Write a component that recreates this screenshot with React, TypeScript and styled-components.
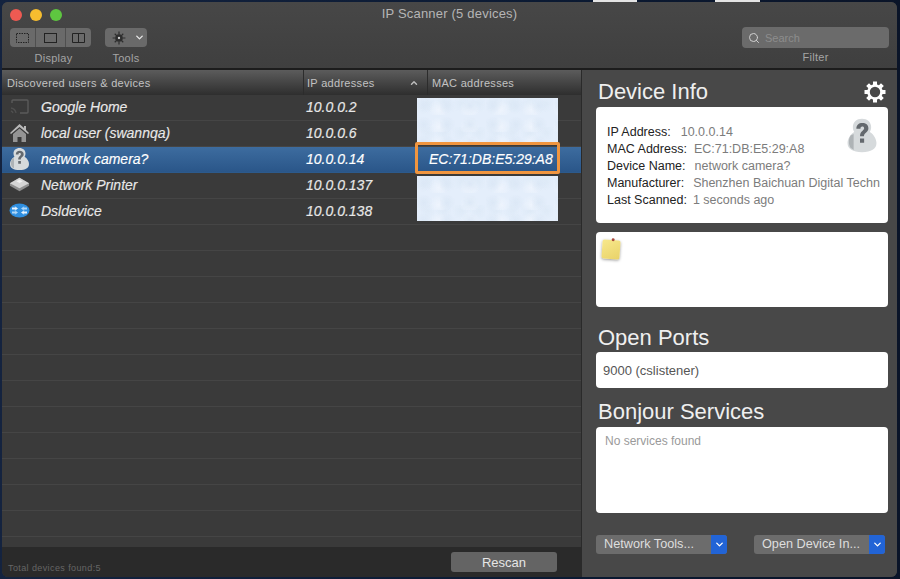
import styled, { createGlobalStyle } from "styled-components";
import { Search, ChevronDown, ChevronUp } from "lucide-react";

const GlobalStyle = createGlobalStyle`
  html, body {
    margin: 0;
    padding: 0;
    width: 900px;
    height: 579px;
    overflow: hidden;
    background: #0c1a33;
    font-family: "Liberation Sans", Arial, sans-serif;
  }
`;

const Desktop = styled.div`
  width: 900px;
  height: 579px;
  padding: 2px 3px 2px 2px;
  box-sizing: border-box;
  position: relative;
  background: linear-gradient(90deg, #14233f, #0b1a33 60%, #0a1428);
`;

const MenuScrap = styled.span<{ $left: number; $w: number }>`
  position: absolute;
  top: 0;
  left: ${(p) => p.$left}px;
  width: ${(p) => p.$w}px;
  height: 2px;
  background: #e4e4e4;
`;

const Window = styled.div`
  width: 100%;
  height: 100%;
  display: flex;
  flex-direction: column;
  border-radius: 6px;
  overflow: hidden;
  background: #3c3c3c;
  position: relative;
`;

const TitleBar = styled.div`
  height: 66px;
  flex: none;
  position: relative;
  background: linear-gradient(180deg, #474747, #3f3f3f);
  border-bottom: 2px solid #1c1c1c;
  padding: 0 8px;
  display: flex;
  flex-direction: column;
`;

const TopLine = styled.div`
  height: 25px;
  display: flex;
  align-items: center;
  gap: 8px;
  position: relative;
`;

const Light = styled.span<{ $color: string }>`
  width: 12px;
  height: 12px;
  border-radius: 50%;
  background: ${(p) => p.$color};
`;

const WindowTitle = styled.div`
  position: absolute;
  left: 0;
  right: 0;
  top: 4px;
  text-align: center;
  font-size: 13px;
  color: #b5b5b5;
  letter-spacing: 0.2px;
`;

const ToolRow = styled.div`
  display: flex;
  justify-content: space-between;
  align-items: flex-start;
`;

const ToolGroups = styled.div`
  display: flex;
  gap: 14px;
`;

const ToolGroup = styled.div`
  display: flex;
  flex-direction: column;
  align-items: center;
  gap: 5px;
  padding-top: 1px;
`;

const ToolLabel = styled.span<{ $offset?: number }>`
  font-size: 11px;
  line-height: 13px;
  color: #a5a5a5;
  letter-spacing: 0.3px;
  padding-left: ${(p) => p.$offset ?? 0}px;
`;

const Segmented = styled.div`
  display: flex;
  height: 19px;
  border-radius: 4px;
  overflow: hidden;
  background: #6a6a6a;
`;

const Segment = styled.div<{ $w: number; $plain?: boolean }>`
  width: ${(p) => p.$w}px;
  display: flex;
  align-items: center;
  justify-content: center;
  border-left: ${(p) => (p.$plain ? "none" : "1px solid #4f4f4f")};
  box-sizing: border-box;
  &:first-child {
    border-left: none;
  }
`;

const FilterGroup = styled.div`
  display: flex;
  flex-direction: column;
  align-items: center;
  gap: 3px;
`;

const SearchBox = styled.div`
  width: 147px;
  height: 21px;
  border-radius: 4px;
  background: #6b6b6b;
  display: flex;
  align-items: center;
  gap: 5px;
  padding-left: 6px;
  box-sizing: border-box;
  color: #d0d0d0;
  font-size: 11px;
  span {
    color: #8d8d8d;
  }
`;

const Body = styled.div`
  flex: 1;
  display: flex;
  min-height: 0;
`;

const LeftPane = styled.div`
  width: 579px;
  flex: none;
  display: flex;
  flex-direction: column;
  position: relative;
  border-right: 1px solid #2a2a2a;
`;

const HeaderRow = styled.div`
  height: 25px;
  flex: none;
  display: grid;
  grid-template-columns: 301px 124px 1fr;
  background: linear-gradient(180deg, #5c5c5c, #2e2e2e);
`;

const HeaderCell = styled.div<{ $pad: number }>`
  display: flex;
  align-items: center;
  justify-content: space-between;
  padding: 0 8px 0 ${(p) => p.$pad}px;
  font-size: 11px;
  letter-spacing: 0.3px;
  color: #c2c2c2;
  border-left: 1px solid #2c2c2c;
  &:first-child {
    border-left: none;
  }
`;

const List = styled.div`
  flex: 1;
  min-height: 0;
  overflow: hidden;
  position: relative;
  background: #3a3a3a;
`;

const Row = styled.div<{ $selected?: boolean }>`
  height: 26px;
  box-sizing: border-box;
  padding-bottom: 2px;
  display: grid;
  grid-template-columns: 301px 124px 1fr;
  align-items: center;
  border-bottom: 1px solid ${(p) => (p.$selected ? "#2c5a8c" : "#454545")};
  background: ${(p) =>
    p.$selected ? "linear-gradient(180deg, #3d6c9f, #2a5689)" : "#3a3a3a"};
  font-style: italic;
  font-size: 14px;
  color: ${(p) => (p.$selected ? "#fff" : "#e8e8e8")};
  -webkit-text-stroke: 0.15px;
`;

const NameCell = styled.div`
  display: flex;
  align-items: center;
  gap: 11px;
  padding-left: 7px;
`;

const IconSlot = styled.span`
  width: 21px;
  height: 21px;
  flex: none;
  display: flex;
  align-items: center;
  justify-content: center;
`;

const IpCell = styled.div`
  padding-left: 3px;
`;

const MacCell = styled.div`
  padding-left: 2px;
  color: #fff;
`;

const Redacted = styled.div<{ $top: number; $h: number }>`
  position: absolute;
  left: 415px;
  width: 141px;
  top: ${(p) => p.$top}px;
  height: ${(p) => p.$h}px;
  background-color: #e4eefb;
  background-image:
    radial-gradient(circle at 30% 40%, #dce8f6 0, transparent 45%),
    radial-gradient(circle at 70% 70%, #eef4fd 0, transparent 40%),
    radial-gradient(circle at 60% 20%, #deeaf7 0, transparent 35%);
  background-size: 23px 19px, 31px 17px, 17px 29px;
`;

const Highlight = styled.div`
  position: absolute;
  left: 413px;
  top: 47px;
  width: 145px;
  height: 32px;
  border: 3px solid #f0953f;
  border-radius: 2px;
  box-sizing: border-box;
`;

const Footer = styled.div`
  height: 30px;
  flex: none;
  background: #2a2a2a;
  display: flex;
  align-items: center;
  justify-content: space-between;
  padding: 0 24px 0 6px;
`;

const TotalText = styled.span`
  font-size: 9px;
  letter-spacing: 0.4px;
  color: #666;
  margin-top: 11px;
`;

const RescanButton = styled.button`
  width: 106px;
  height: 20px;
  border: none;
  border-radius: 3px;
  background: #646464;
  color: #e6e6e6;
  font-family: inherit;
  font-size: 13px;
  padding: 0;
`;

const RightPane = styled.div`
  flex: 1;
  background: #484848;
  display: flex;
  flex-direction: column;
  padding: 0 9px 0 14px;
  min-width: 0;
`;

const SectionHead = styled.div<{ $mt: number }>`
  display: flex;
  align-items: center;
  justify-content: space-between;
  margin-top: ${(p) => p.$mt}px;
  font-size: 22px;
  line-height: 26px;
  color: #efefef;
  padding-left: 2px;
  padding-right: 1px;
`;

const Card = styled.div<{ $h: number; $mt: number }>`
  height: ${(p) => p.$h}px;
  margin-top: ${(p) => p.$mt}px;
  border-radius: 4px;
  background: #fff;
  position: relative;
  box-sizing: border-box;
  flex: none;
`;

const InfoGrid = styled.div`
  padding: 17px 0 0 11px;
  font-size: 12.5px;
  line-height: 17px;
  white-space: nowrap;
  overflow: hidden;
`;

const InfoLine = styled.div<{ $gap: number }>`
  display: flex;
  gap: ${(p) => p.$gap}px;
  color: #7c7c7c;
  b {
    font-weight: 400;
    color: #222;
  }
`;

const CameraBadge = styled.div`
  position: absolute;
  right: 10px;
  top: 10px;
`;

const NoteIcon = styled.div`
  position: absolute;
  left: 6px;
  top: 8px;
  width: 18px;
  height: 19px;
  border-radius: 2px;
  background: linear-gradient(150deg, #f7e88c, #e9d268);
  box-shadow: 0 1px 3px rgba(0, 0, 0, 0.4);
  transform: rotate(4deg);
  &::after {
    content: "";
    position: absolute;
    top: -2px;
    left: 9px;
    width: 3px;
    height: 3px;
    border-radius: 50%;
    background: #a8483a;
  }
`;

const PortText = styled.div`
  padding: 11px 0 0 7px;
  font-size: 13px;
  line-height: 15px;
  color: #555;
`;

const EmptyText = styled.div`
  padding: 7px 0 0 9px;
  font-size: 12px;
  color: #9a9a9a;
`;

const BottomBar = styled.div`
  display: flex;
  justify-content: space-between;
  margin-top: 22px;
  padding-right: 3px;
`;

const SplitButton = styled.div`
  width: 131px;
  height: 19px;
  display: flex;
  border-radius: 3px;
  overflow: hidden;
  background: #6c6c6c;
  font-size: 12.7px;
  color: #dedede;
`;

const SplitLabel = styled.span`
  flex: 1;
  padding-left: 8px;
  line-height: 19px;
  white-space: nowrap;
`;

const SplitArrow = styled.span`
  width: 16px;
  background: #2264d6;
  display: flex;
  align-items: center;
  justify-content: center;
  color: #fff;
`;

const CastIcon = () => (
  <svg width="21" height="17" viewBox="0 0 21 17" fill="none" stroke="#5b5b5b" strokeWidth="1.4">
    <path d="M3 5V3a1 1 0 0 1 1-1h14a1 1 0 0 1 1 1v11a1 1 0 0 1-1 1h-7" />
    <path d="M2 10a6 6 0 0 1 5 5M2 13a3 3 0 0 1 2 2" stroke="#4f4f4f" />
  </svg>
);

const HouseIcon = () => (
  <svg width="21" height="20" viewBox="0 0 21 20">
    <path d="M10.5 1 1 10l1 1 8.5-7 8.500 7 1-1-3-3V3h-2v2z" fill="#b8b8b8" />
    <path d="M4 11l6.500-5.500L17 11v8h-4.500v-5h-4v5H4z" fill="#949494" />
  </svg>
);

const CameraIcon = ({ w = 21, h = 24 }: { w?: number; h?: number }) => (
  <svg width={w} height={h} viewBox="0 0 21 24">
    <path d="M10.500 1c3.500 0 6 2.300 6 5.500 0 1.300-.3 2.300-.9 3.200C18.500 11.500 20 14.500 20 17c0 4-3.500 6-9.500 6S1 21 1 17c0-2.500 1.500-5.500 4.400-7.300-.6-.9-.9-1.900-.9-3.200 0-3.200 2.500-5.500 6-5.500z" fill="#d6dadc" />
    <path d="M3 12c-1.500 2.500-1.500 6 0 8l2 1.500V11z" fill="#aeb3b6" />
    <path d="M6.800 7.500c0-2.400 1.600-3.700 3.900-3.700 2.300 0 4 1.200 4 3.400 0 2.800-2.900 2.900-2.900 5.300H9.200c0-3.500 2.700-3.600 2.700-5.200 0-.8-.5-1.200-1.200-1.200-.8 0-1.200.5-1.200 1.400zM9.200 14h2.700v2.800H9.200z" fill="#64696e" />
  </svg>
);

const PrinterIcon = () => (
  <svg width="23" height="17" viewBox="0 0 23 17">
    <path d="M1 7l10.500-6L22 7v3l-10.500 6L1 10z" fill="#8f8f8f" />
    <path d="M1 7l10.500-6L22 7l-10.500 5.500z" fill="#d4d4d4" />
    <path d="M8 5l3.500-1.800L15 5l-3.500 1.800z" fill="#f0f0f0" />
  </svg>
);

const RouterIcon = () => (
  <svg width="21" height="15" viewBox="0 0 21 15">
    <ellipse cx="10.500" cy="7.500" rx="10" ry="7" fill="#2f8fe0" />
    <path d="M3 4.500h3.500L5.500 3 9 5.500 5.500 8l1-1.500H3zM18 10.500h-3.500l1 1.500L12 9.500 15.500 7l-1 1.500H18z" fill="#e8f4ff" />
    <path d="M18 4.500h-3.500l1-1.500L12 5.500 15.500 8l-1-1.500H18zM3 10.500h3.500l-1 1.500L9 9.500 5.500 7l1 1.500H3z" fill="#cfe8ff" opacity=".8" />
  </svg>
);

const SmallGear = () => (
  <svg width="14" height="14" viewBox="0 0 24 24" fill="#2e2e2e">
    <circle cx="12" cy="12" r="6.500" />
    <path d="M11 1h2v5h-2zM11 18h2v5h-2zM1 11h5v2H1zM18 11h5v2h-5zM4 5.400 5.400 4l3.500 3.500-1.400 1.400zM15.100 16.500l1.400-1.400 3.500 3.500-1.400 1.400zM4 18.600l3.500-3.500 1.400 1.400L5.400 20zM15.100 7.500 18.600 4 20 5.400l-3.500 3.500z" />
    <circle cx="12" cy="12" r="2" fill="#cfcfcf" />
  </svg>
);

const BigGear = () => (
  <svg width="24" height="24" viewBox="0 0 24 24" fill="none" stroke="#fff" strokeLinejoin="round">
    <circle cx="12" cy="12" r="6.500" strokeWidth="2.600" />
    <path
      strokeWidth="4"
      d="M12 1.500v3.500M12 19v3.500M1.500 12H5M19 12h3.500M4.600 4.600l2.500 2.500M16.900 16.900l2.500 2.500M4.600 19.400l2.500-2.500M16.900 7.100l2.500-2.500"
    />
  </svg>
);

interface IDevice {
  name: string;
  ip: string;
  mac?: string;
  icon: React.ReactNode;
  selected?: boolean;
}

const devices: IDevice[] = [
  { name: "Google Home", ip: "10.0.0.2", icon: <CastIcon /> },
  { name: "local user (swannqa)", ip: "10.0.0.6", icon: <HouseIcon /> },
  { name: "network camera?", ip: "10.0.0.14", mac: "EC:71:DB:E5:29:A8", icon: <CameraIcon />, selected: true },
  { name: "Network Printer", ip: "10.0.0.137", icon: <PrinterIcon /> },
  { name: "Dsldevice", ip: "10.0.0.138", icon: <RouterIcon /> },
];

const emptyRows = Array.from({ length: 13 }, (_, i) => i);

function App() {
  return (
    <>
      <GlobalStyle />
      <Desktop>
        <MenuScrap $left={593} $w={44} />
        <MenuScrap $left={715} $w={45} />
        <Window>
          <TitleBar>
            <TopLine>
              <Light $color="#ee5a52" />
              <Light $color="#f6bd2f" />
              <Light $color="#5ec640" />
              <WindowTitle>IP Scanner (5 devices)</WindowTitle>
            </TopLine>
            <ToolRow>
              <ToolGroups>
                <ToolGroup>
                  <Segmented>
                    <Segment $w={25}>
                      <svg width="13" height="10"><rect x=".5" y=".5" width="12" height="9" fill="none" stroke="#222" strokeDasharray="1.500 1" /></svg>
                    </Segment>
                    <Segment $w={30}>
                      <svg width="13" height="10"><rect x=".5" y=".5" width="12" height="9" fill="none" stroke="#222" /></svg>
                    </Segment>
                    <Segment $w={26}>
                      <svg width="13" height="10"><path d="M.5.500h12v9H.5zM6.500.500v9" fill="none" stroke="#222" /></svg>
                    </Segment>
                  </Segmented>
                  <ToolLabel $offset={6}>Display</ToolLabel>
                </ToolGroup>
                <ToolGroup>
                  <Segmented>
                    <Segment $w={27}><SmallGear /></Segment>
                    <Segment $w={15} $plain><ChevronDown size={11} strokeWidth={3} color="#e8e8e8" /></Segment>
                  </Segmented>
                  <ToolLabel>Tools</ToolLabel>
                </ToolGroup>
              </ToolGroups>
              <FilterGroup>
                <SearchBox>
                  <Search size={12} />
                  <span>Search</span>
                </SearchBox>
                <ToolLabel>Filter</ToolLabel>
              </FilterGroup>
            </ToolRow>
          </TitleBar>
          <Body>
            <LeftPane>
              <HeaderRow>
                <HeaderCell $pad={5}>Discovered users &amp; devices</HeaderCell>
                <HeaderCell $pad={3}>
                  IP addresses
                  <ChevronUp size={10} strokeWidth={3.500} color="#bbb" />
                </HeaderCell>
                <HeaderCell $pad={4}>MAC addresses</HeaderCell>
              </HeaderRow>
              <List>
                {devices.map((d) => (
                  <Row key={d.ip} $selected={d.selected}>
                    <NameCell>
                      <IconSlot>{d.icon}</IconSlot>
                      {d.name}
                    </NameCell>
                    <IpCell>{d.ip}</IpCell>
                    <MacCell>{d.mac}</MacCell>
                  </Row>
                ))}
                {emptyRows.map((i) => (
                  <Row key={i} />
                ))}
                <Redacted $top={3} $h={46} />
                <Redacted $top={81} $h={45} />
                <Highlight />
              </List>
              <Footer>
                <TotalText>Total devices found:5</TotalText>
                <RescanButton>Rescan</RescanButton>
              </Footer>
            </LeftPane>
            <RightPane>
              <SectionHead $mt={9}>
                Device Info
                <BigGear />
              </SectionHead>
              <Card $h={116} $mt={2}>
                <InfoGrid>
                  <InfoLine $gap={10}><b>IP Address:</b>10.0.0.14</InfoLine>
                  <InfoLine $gap={7}><b>MAC Address:</b>EC:71:DB:E5:29:A8</InfoLine>
                  <InfoLine $gap={9}><b>Device Name:</b>network camera?</InfoLine>
                  <InfoLine $gap={9}><b>Manufacturer:</b>Shenzhen Baichuan Digital Techn</InfoLine>
                  <InfoLine $gap={6}><b>Last Scanned:</b>1 seconds ago</InfoLine>
                </InfoGrid>
                <CameraBadge><CameraIcon w={32} h={37} /></CameraBadge>
              </Card>
              <Card $h={75} $mt={9}>
                <NoteIcon />
              </Card>
              <SectionHead $mt={18}>Open Ports</SectionHead>
              <Card $h={36} $mt={1}>
                <PortText>9000 (cslistener)</PortText>
              </Card>
              <SectionHead $mt={11}>Bonjour Services</SectionHead>
              <Card $h={86} $mt={2}>
                <EmptyText>No services found</EmptyText>
              </Card>
              <BottomBar>
                <SplitButton>
                  <SplitLabel>Network Tools...</SplitLabel>
                  <SplitArrow><ChevronDown size={11} strokeWidth={3} /></SplitArrow>
                </SplitButton>
                <SplitButton>
                  <SplitLabel>Open Device In...</SplitLabel>
                  <SplitArrow><ChevronDown size={11} strokeWidth={3} /></SplitArrow>
                </SplitButton>
              </BottomBar>
            </RightPane>
          </Body>
        </Window>
      </Desktop>
    </>
  );
}

export default App;
